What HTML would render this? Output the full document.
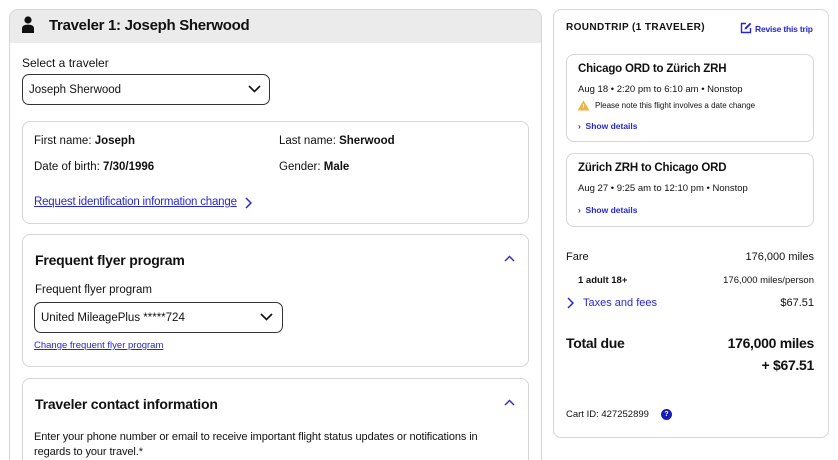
<!DOCTYPE html>
<html style="width:838px;height:460px;overflow:hidden"><head><style>
*{box-sizing:border-box;margin:0;padding:0}
body{width:838px;height:460px;background:#fff;font-family:"Liberation Sans",sans-serif;color:#111;position:relative;overflow:hidden}
.a{position:absolute;white-space:nowrap}
.box{position:absolute;border:1px solid #d6d6d6;border-radius:8px;background:#fff}
.blue{color:#2727d0}
.sel{position:absolute;border:1px solid #333;border-radius:7px;background:#fff}
b{font-weight:bold}
</style></head><body>
<div class="box" style="left:9px;top:9px;width:533px;height:451px;border-radius:9px 9px 0 0;border-bottom:none;overflow:hidden">
 <div style="height:33px;background:#ebebeb"></div>
</div>
<svg class="a" style="left:21px;top:16px" width="14" height="18" viewBox="0 0 14 18"><circle cx="7" cy="4" r="3.6" fill="#111"/><path d="M1 17V12.5C1 10 3 8.6 7 8.6S13 10 13 12.5V17Z" fill="#111"/></svg>
<div class="a" style="left:49px;top:17px;font-size:15px;font-weight:bold;letter-spacing:-0.3px">Traveler 1: Joseph Sherwood</div>
<div class="a" style="left:22px;top:56px;font-size:12px">Select a traveler</div>
<div class="sel" style="left:22px;top:74px;width:248px;height:31px"></div>
<div class="a" style="left:29px;top:84px;font-size:11.5px">Joseph Sherwood</div>
<svg class="a" style="left:248px;top:85px" width="13" height="8" viewBox="0 0 13 8"><path d="M1 1L6.5 6.5L12 1" stroke="#111" stroke-width="1.6" fill="none"/></svg>

<div class="box" style="left:22px;top:121px;width:507px;height:103px"></div>
<div class="a" style="left:34px;top:135px;font-size:11.5px">First name: <b>Joseph</b></div>
<div class="a" style="left:279px;top:135px;font-size:11.5px">Last name: <b>Sherwood</b></div>
<div class="a" style="left:34px;top:161px;font-size:11.5px">Date of birth: <b>7/30/1996</b></div>
<div class="a" style="left:279px;top:161px;font-size:11.5px">Gender: <b>Male</b></div>
<div class="a blue" style="left:34px;top:196px;font-size:11.5px;text-decoration:underline;letter-spacing:-0.2px">Request identification information change</div>
<svg class="a" style="left:245px;top:197px" width="7" height="12" viewBox="0 0 7 12"><path d="M1 1L6 6L1 11" stroke="#2727d0" stroke-width="1.5" fill="none"/></svg>

<div class="box" style="left:22px;top:234px;width:507px;height:133px"></div>
<div class="a" style="left:35px;top:252px;font-size:14px;font-weight:bold;letter-spacing:-0.2px">Frequent flyer program</div>
<svg class="a" style="left:504px;top:255px" width="11" height="7" viewBox="0 0 11 7"><path d="M1 6L5.5 1.5L10 6" stroke="#2727d0" stroke-width="1.4" fill="none"/></svg>
<div class="a" style="left:35px;top:284px;font-size:11.5px">Frequent flyer program</div>
<div class="sel" style="left:34px;top:302px;width:249px;height:31px"></div>
<div class="a" style="left:41px;top:312px;font-size:11.5px">United MileagePlus *****724</div>
<svg class="a" style="left:260px;top:313px" width="13" height="8" viewBox="0 0 13 8"><path d="M1 1L6.5 6.5L12 1" stroke="#111" stroke-width="1.6" fill="none"/></svg>
<div class="a blue" style="left:34px;top:340px;font-size:9.5px;text-decoration:underline">Change frequent flyer program</div>

<div class="box" style="left:22px;top:378px;width:507px;height:82px;border-radius:8px 8px 0 0;border-bottom:none"></div>
<div class="a" style="left:35px;top:396px;font-size:14px;font-weight:bold;letter-spacing:-0.2px">Traveler contact information</div>
<svg class="a" style="left:504px;top:399px" width="11" height="7" viewBox="0 0 11 7"><path d="M1 6L5.5 1.5L10 6" stroke="#2727d0" stroke-width="1.4" fill="none"/></svg>
<div class="a" style="left:34px;top:431px;font-size:11px;letter-spacing:-0.1px">Enter your phone number or email to receive important flight status updates or notifications in</div>
<div class="a" style="left:34px;top:446px;font-size:11px;letter-spacing:-0.1px;line-height:13px">regards to your travel.*</div>

<div class="box" style="left:553px;top:9px;width:276px;height:429px"></div>
<div class="a" style="left:566px;top:22px;font-size:10px;font-weight:bold;letter-spacing:0.4px">ROUNDTRIP (1 TRAVELER)</div>
<svg class="a" style="left:740px;top:22px" width="12" height="12" viewBox="0 0 12 12"><path d="M6 1.5H1.5V10.5H10.5V6" stroke="#2727d0" stroke-width="1.4" fill="none"/><path d="M4.5 7.5L5 5.5L10 0.8L11.3 2L6.5 7Z" fill="#2727d0"/></svg>
<div class="a blue" style="left:755px;top:24px;font-size:8.5px;font-weight:bold;letter-spacing:-0.2px">Revise this trip</div>

<div class="box" style="left:566px;top:54px;width:248px;height:88px"></div>
<div class="a" style="left:578px;top:63px;font-size:11.5px;font-weight:bold;letter-spacing:-0.2px">Chicago ORD to Zürich ZRH</div>
<div class="a" style="left:578px;top:84px;font-size:9.5px">Aug 18 • 2:20 pm to 6:10 am • Nonstop</div>
<svg class="a" style="left:577px;top:100px" width="13" height="11" viewBox="0 0 13 11"><path d="M6.5 0.5L12.5 10.5H0.5Z" fill="#f0b24a"/><rect x="6" y="4" width="1" height="3.5" fill="#fff"/></svg>
<div class="a" style="left:595px;top:101px;font-size:8px">Please note this flight involves a date change</div>
<div class="a blue" style="left:578px;top:121px;font-size:8.5px;font-weight:bold">›&nbsp; Show details</div>

<div class="box" style="left:566px;top:153px;width:248px;height:74px"></div>
<div class="a" style="left:578px;top:162px;font-size:11.5px;font-weight:bold;letter-spacing:-0.2px">Zürich ZRH to Chicago ORD</div>
<div class="a" style="left:578px;top:183px;font-size:9.5px">Aug 27 • 9:25 am to 12:10 pm • Nonstop</div>
<div class="a blue" style="left:578px;top:205px;font-size:8.5px;font-weight:bold">›&nbsp; Show details</div>

<div class="a" style="left:566px;top:251px;font-size:11px">Fare</div>
<div class="a" style="right:24px;top:251px;font-size:11px">176,000 miles</div>
<div class="a" style="left:578px;top:275px;font-size:9.5px;font-weight:bold">1 adult 18+</div>
<div class="a" style="right:24px;top:275px;font-size:9.5px">176,000 miles/person</div>
<svg class="a" style="left:567px;top:297px" width="7" height="12" viewBox="0 0 7 12"><path d="M1 1L6 6L1 11" stroke="#2727d0" stroke-width="1.5" fill="none"/></svg>
<div class="a blue" style="left:583px;top:297px;font-size:11px">Taxes and fees</div>
<div class="a" style="right:24px;top:297px;font-size:11px">$67.51</div>
<div class="a" style="left:566px;top:335px;font-size:14px;font-weight:bold;letter-spacing:-0.3px">Total due</div>
<div class="a" style="right:24px;top:335px;font-size:14px;font-weight:bold;letter-spacing:-0.3px">176,000 miles</div>
<div class="a" style="right:24px;top:357px;font-size:14px;font-weight:bold;letter-spacing:-0.3px">+ $67.51</div>
<div class="a" style="left:566px;top:409px;font-size:9.5px">Cart ID: 427252899</div>
<div class="a" style="left:661px;top:409px;width:11px;height:11px;border-radius:50%;background:#1b1bb8;color:#fff;font-size:7px;text-align:center;line-height:11px;font-weight:bold">?</div>
</body></html>
